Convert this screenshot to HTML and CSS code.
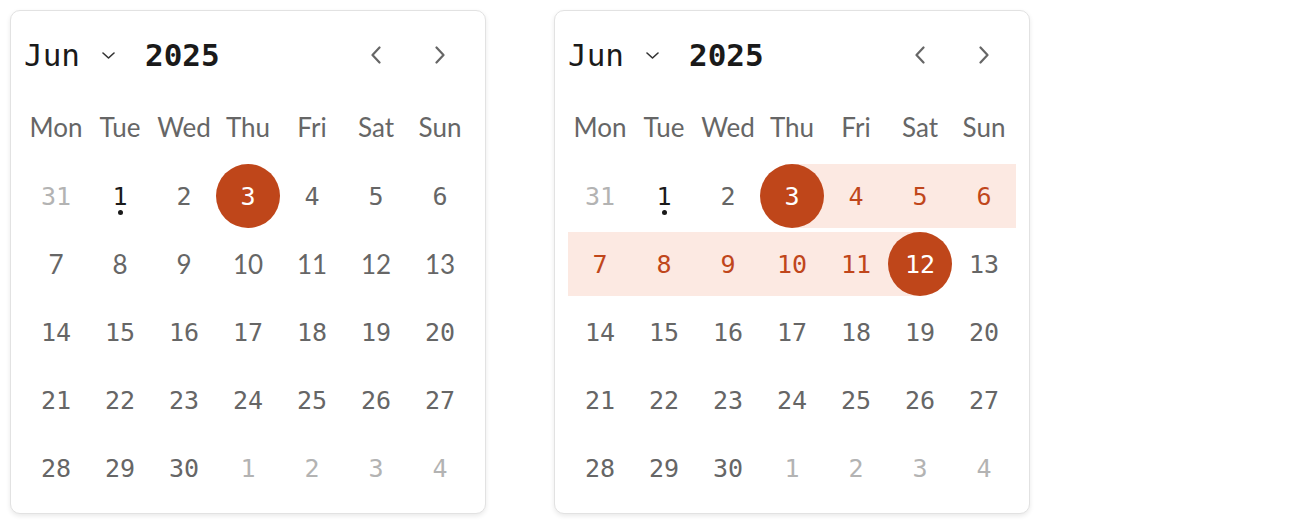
FILE: index.html
```html
<!DOCTYPE html>
<html>
<head>
<meta charset="utf-8">
<link rel="stylesheet" href="styles.css">
</head>
<body>
<div class="page">
  <div class="card">
    <div class="head">
      <span class="month">Jun</span>
      <svg class="caret" width="13" height="7" viewBox="0 0 13 7"><path d="M1 1 L6.5 6 L12 1" fill="none" stroke="#333" stroke-width="1.6" stroke-linecap="round" stroke-linejoin="round"/></svg>
      <span class="year">2025</span>
      <div class="nav">
        <span class="navbtn"><svg width="10" height="18" viewBox="0 0 10 18"><path d="M8.5 1.5 L1.5 9 L8.5 16.5" fill="none" stroke="#666" stroke-width="2.2" stroke-linecap="round" stroke-linejoin="round"/></svg></span>
        <span class="navbtn"><svg width="10" height="18" viewBox="0 0 10 18"><path d="M1.5 1.5 L8.5 9 L1.5 16.5" fill="none" stroke="#666" stroke-width="2.2" stroke-linecap="round" stroke-linejoin="round"/></svg></span>
      </div>
    </div>
    <div class="weekdays">
      <span>Mon</span><span>Tue</span><span>Wed</span><span>Thu</span><span>Fri</span><span>Sat</span><span>Sun</span>
    </div>
    <div class="grid">
      <span class="d out">31</span><span class="d today">1</span><span class="d">2</span><span class="d sel"><b>3</b></span><span class="d">4</span><span class="d">5</span><span class="d">6</span>
      <span class="d sans">7</span><span class="d sans">8</span><span class="d sans">9</span><span class="d sans">10</span><span class="d sans">11</span><span class="d sans">12</span><span class="d sans">13</span>
      <span class="d">14</span><span class="d">15</span><span class="d">16</span><span class="d">17</span><span class="d">18</span><span class="d">19</span><span class="d">20</span>
      <span class="d">21</span><span class="d">22</span><span class="d">23</span><span class="d">24</span><span class="d">25</span><span class="d">26</span><span class="d">27</span>
      <span class="d">28</span><span class="d">29</span><span class="d">30</span><span class="d out">1</span><span class="d out">2</span><span class="d out">3</span><span class="d out">4</span>
    </div>
  </div>

  <div class="card">
    <div class="head">
      <span class="month">Jun</span>
      <svg class="caret" width="13" height="7" viewBox="0 0 13 7"><path d="M1 1 L6.5 6 L12 1" fill="none" stroke="#333" stroke-width="1.6" stroke-linecap="round" stroke-linejoin="round"/></svg>
      <span class="year">2025</span>
      <div class="nav">
        <span class="navbtn"><svg width="10" height="18" viewBox="0 0 10 18"><path d="M8.5 1.5 L1.5 9 L8.5 16.5" fill="none" stroke="#666" stroke-width="2.2" stroke-linecap="round" stroke-linejoin="round"/></svg></span>
        <span class="navbtn"><svg width="10" height="18" viewBox="0 0 10 18"><path d="M1.5 1.5 L8.5 9 L1.5 16.5" fill="none" stroke="#666" stroke-width="2.2" stroke-linecap="round" stroke-linejoin="round"/></svg></span>
      </div>
    </div>
    <div class="weekdays">
      <span>Mon</span><span>Tue</span><span>Wed</span><span>Thu</span><span>Fri</span><span>Sat</span><span>Sun</span>
    </div>
    <div class="grid">
      <span class="d out">31</span><span class="d today">1</span><span class="d">2</span><span class="d sel start"><b>3</b></span><span class="d range">4</span><span class="d range">5</span><span class="d range">6</span>
      <span class="d range">7</span><span class="d range">8</span><span class="d range">9</span><span class="d range">10</span><span class="d range">11</span><span class="d sel end"><b>12</b></span><span class="d">13</span>
      <span class="d">14</span><span class="d">15</span><span class="d">16</span><span class="d">17</span><span class="d">18</span><span class="d">19</span><span class="d">20</span>
      <span class="d">21</span><span class="d">22</span><span class="d">23</span><span class="d">24</span><span class="d">25</span><span class="d">26</span><span class="d">27</span>
      <span class="d">28</span><span class="d">29</span><span class="d">30</span><span class="d out">1</span><span class="d out">2</span><span class="d out">3</span><span class="d out">4</span>
    </div>
  </div>
</div>
</body>
</html>
```

FILE: styles.css
```css
html, body {
  margin: 0;
  padding: 0;
  background: #ffffff;
}

.page {
  display: flex;
  gap: 68px;
  padding: 10px;
  align-items: flex-start;
}

.card {
  width: 448px;
  padding: 13px;
  border: 1px solid #e2e2e2;
  border-radius: 10px;
  box-shadow: 0 2px 5px rgba(0, 0, 0, 0.09);
  background: #fff;
}

.head {
  height: 62px;
  display: flex;
  align-items: center;
  font-family: "DejaVu Sans Mono", monospace;
  font-size: 31px;
  color: #1a1a1a;
}

.month {
  font-weight: 400;
}

.caret {
  margin-left: 22px;
  display: block;
}

.year {
  margin-left: 30px;
  font-weight: 700;
}

.nav {
  margin-left: auto;
  display: flex;
}

.navbtn {
  width: 64px;
  height: 62px;
  display: flex;
  align-items: center;
  justify-content: center;
}

.weekdays {
  height: 66px;
  padding-top: 8px;
  margin-bottom: 4px;
  display: grid;
  grid-template-columns: repeat(7, 64px);
  align-items: center;
  font-family: Lato, "Liberation Sans", sans-serif;
  font-size: 26px;
  color: #666666;
}

.weekdays span {
  text-align: center;
}

.grid {
  display: grid;
  grid-template-columns: repeat(7, 64px);
  grid-auto-rows: 64px;
  row-gap: 4px;
}

.d {
  position: relative;
  display: flex;
  align-items: center;
  justify-content: center;
  font-family: "DejaVu Sans Mono", monospace;
  font-size: 25px;
  color: #666666;
}

.d.sans {
  font-family: Lato, "Liberation Sans", sans-serif;
  font-size: 26px;
}

.d.out {
  color: #b3b3b3;
}

.d.today {
  color: #1a1a1a;
}

.d.today::after {
  content: "";
  position: absolute;
  left: 30px;
  top: 46px;
  width: 5px;
  height: 5px;
  border-radius: 50%;
  background: #1a1a1a;
}

.d.range {
  background: #fce9e2;
  color: #c0461b;
}

.d.sel b {
  width: 64px;
  height: 64px;
  border-radius: 50%;
  background: #bf461a;
  color: #fff;
  font-weight: 400;
  display: flex;
  align-items: center;
  justify-content: center;
  position: relative;
}

.d.start {
  background: linear-gradient(to right, transparent 50%, #fce9e2 50%);
}

.d.end {
  background: linear-gradient(to right, #fce9e2 50%, transparent 50%);
}
```
